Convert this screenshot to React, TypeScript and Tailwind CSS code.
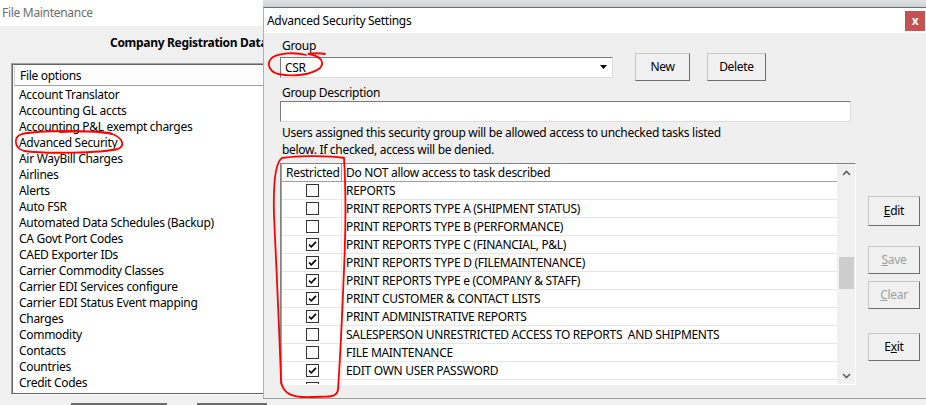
import React from 'react';

const files = [
  'Account Translator',
  'Accounting GL accts',
  'Accounting P&L exempt charges',
  'Advanced Security',
  'Air WayBill Charges',
  'Airlines',
  'Alerts',
  'Auto FSR',
  'Automated Data Schedules (Backup)',
  'CA Govt Port Codes',
  'CAED Exporter IDs',
  'Carrier Commodity Classes',
  'Carrier EDI Services configure',
  'Carrier EDI Status Event mapping',
  'Charges',
  'Commodity',
  'Contacts',
  'Countries',
  'Credit Codes',
];

const tasks: [string, boolean][] = [
  ['REPORTS', false],
  ['PRINT REPORTS TYPE A (SHIPMENT STATUS)', false],
  ['PRINT REPORTS TYPE B (PERFORMANCE)', false],
  ['PRINT REPORTS TYPE C (FINANCIAL, P&L)', true],
  ['PRINT REPORTS TYPE D (FILEMAINTENANCE)', true],
  ['PRINT REPORTS TYPE e (COMPANY & STAFF)', true],
  ['PRINT CUSTOMER & CONTACT LISTS', true],
  ['PRINT ADMINISTRATIVE REPORTS', true],
  ['SALESPERSON UNRESTRICTED ACCESS TO REPORTS  AND SHIPMENTS', false],
  ['FILE MAINTENANCE', false],
  ['EDIT OWN USER PASSWORD', true],
  ['ADD/DELETE/EDIT USERS', false],
];

function CheckBox({ checked }: { checked: boolean }) {
  return (
    <div className="w-[13px] h-[13px] border border-[#333333] bg-white flex items-center justify-center">
      {checked && (
        <svg width="11" height="11" viewBox="0 0 11 11">
          <path d="M2 5.5 L4.3 7.8 L9 2.8" fill="none" stroke="#000" strokeWidth="1.7" />
        </svg>
      )}
    </div>
  );
}

function WinButton({ children, disabled, className }: { children: React.ReactNode; disabled?: boolean; className: string }) {
  return (
    <button
      className={
        'bg-[#f0f0f0] border border-[#c8c8c8] border-r-[#6d6d6d] border-b-[#6d6d6d] text-[12px] flex items-center justify-center ' +
        (disabled ? 'text-[#a0a0a0] ' : 'text-black ') +
        className
      }
    >
      {children}
    </button>
  );
}

function Annotations() {
  return (
    <svg className="absolute left-0 top-0 pointer-events-none" width="926" height="405" viewBox="0 0 926 405">
      <g fill="none" stroke="#ff0000" strokeWidth="1.8" strokeLinecap="round">
        <path d="M112 134 C95 130, 40 130, 22 134 C13 137, 14 148, 24 151 C45 154, 100 153, 118 149 C125 146, 124 138, 110 133 C100 131, 80 131, 60 132" />
        <path d="M306 55 C295 52, 280 53, 273 57 C266 62, 268 71, 278 74 C292 77, 312 75, 320 68 C325 62, 321 56, 308 54 C314 53, 320 53, 325 54" />
        <path d="M344 158 C325 155, 295 156, 282 158 C276 162, 273 180, 274 215 C276 260, 279 320, 281 380 C282 394, 292 398, 312 397 C326 396, 336 399, 338 390 C340 360, 342 320, 344 270 C346 225, 346 190, 344 158" />
      </g>
    </svg>
  );
}

export default function App() {
  return (
    <div className="relative w-[926px] h-[405px] overflow-hidden bg-[#f0f0f0] font-['Noto_Sans',sans-serif] text-[12px] tracking-[-0.3px] text-black">
      {/* background window */}
      <div className="flex flex-col">
        <div className="h-[26px] bg-white pl-[2px] leading-[26px] text-[#6d6d6d]">File Maintenance</div>
        <div className="mt-[9px] pl-[110px] leading-[16px] font-bold whitespace-nowrap">Company Registration Data</div>
        <div className="mt-[12px] ml-[11px] w-[320px] h-[332px] border border-[#a0a0a0] border-r-white border-b-white">
          <div className="h-full border border-[#646464] bg-white">
            <div className="h-[20px] ml-[1px] mt-[1px] border-b border-[#a0a0a0] border-l border-l-[#d0d0d0] pl-[5px] leading-[19px] bg-[#fcfcfc]">File options</div>
            <div className="pt-[1px] pl-[6px]">
              {files.map((f) => (
                <div key={f} className="h-[16px] leading-[16px] whitespace-nowrap">{f}</div>
              ))}
            </div>
          </div>
        </div>
        <div className="mt-[8px] flex">
          <div className="ml-[71px] w-[96px] h-[2px] bg-[#6d6d6d]" />
          <div className="ml-[30px] w-[70px] h-[2px] bg-[#6d6d6d]" />
        </div>
      </div>

      {/* dialog */}
      <div className="absolute left-[263px] top-0 w-[663px] h-[399px] flex flex-col">
        <div className="h-[7px] bg-gradient-to-b from-[#e0e2e4] to-[#cfd2d5]" />
        <div className="flex-1 flex flex-col border-t border-[#6e6e6e] border-l border-l-[#b0b0b0] border-b border-b-[#a0a0a0] bg-[#efefef]">
          <div className="h-[25px] bg-white flex items-center justify-between">
            <span className="pl-[3px]">Advanced Security Settings</span>
            <div className="w-[20px] h-[20px] mr-[1px] bg-[#c75050] text-white font-bold text-[12px] flex items-center justify-center leading-none">x</div>
          </div>
          <div className="pl-[16px] pt-[5px] flex flex-col">
            <div className="h-[15px] leading-[15px] pl-[2px]">Group</div>
            <div className="h-[28px] flex items-center">
              <div className="w-[333px] h-[21px] bg-white border border-[#7a7a7a] border-r-[#dcdcdc] border-b-[#dcdcdc] flex items-center">
                <span className="flex-1 pl-[4px] leading-[19px]">CSR</span>
                <div className="w-[15px] h-[17px] mr-[1px] flex items-center justify-center">
                  <svg width="7" height="4" viewBox="0 0 7 4"><path d="M0 0 H7 L3.5 4 Z" fill="#000" /></svg>
                </div>
              </div>
              <WinButton className="ml-[22px] w-[55px] h-[28px]">New</WinButton>
              <WinButton className="ml-[17px] w-[59px] h-[28px]">Delete</WinButton>
            </div>
            <div className="mt-[4px] h-[16px] leading-[16px] pl-[2px]">Group Description</div>
            <div className="w-[571px] h-[21px] bg-white border border-[#7a7a7a] border-r-[#dcdcdc] border-b-[#dcdcdc]" />
            <div className="mt-[2px] pl-[2px] leading-[17px]">
              <div>Users assigned this security group will be allowed access to unchecked tasks listed</div>
              <div>below. If checked, access will be denied.</div>
            </div>
            <div className="mt-[5px] flex">
              <div className="w-[576px] h-[222px] border border-[#828282] border-r-white border-b-white flex">
                <div className="w-[556px] h-[220px] overflow-hidden bg-white border-l border-[#a0a0a0]">
                  <div className="h-[18px] flex border-b border-[#a0a0a0]">
                    <div className="w-[60px] border-r border-[#a0a0a0] pl-[4px] leading-[17px]">Restricted</div>
                    <div className="pl-[4px] leading-[17px]">Do NOT allow access to task described</div>
                  </div>
                  {tasks.map(([t, c]) => (
                    <div key={t} className="h-[18px] flex border-b border-[#e6e6e6]">
                      <div className="w-[60px] border-r border-[#e6e6e6] flex items-center justify-center pl-[1px]">
                        <CheckBox checked={c} />
                      </div>
                      <div className="pl-[4px] leading-[17px] whitespace-pre">{t}</div>
                    </div>
                  ))}
                </div>
                <div className="w-[18px] h-[220px] bg-[#f0f0f0] flex flex-col items-center">
                  <div className="h-[17px] flex items-center justify-center">
                    <svg width="9" height="6" viewBox="0 0 9 6"><path d="M1 5 L4.5 1.5 L8 5" fill="none" stroke="#606060" strokeWidth="1.6" /></svg>
                  </div>
                  <div className="mt-[76px] w-[15px] h-[32px] bg-[#cdcdcd]" />
                  <div className="flex-1" />
                  <div className="h-[17px] flex items-center justify-center">
                    <svg width="9" height="6" viewBox="0 0 9 6"><path d="M1 1 L4.5 4.5 L8 1" fill="none" stroke="#606060" strokeWidth="1.6" /></svg>
                  </div>
                </div>
              </div>
              <div className="ml-[12px] pt-[33px] flex flex-col">
                <WinButton className="w-[52px] h-[30px]"><span><u>E</u>dit</span></WinButton>
                <WinButton disabled className="mt-[20px] w-[52px] h-[28px]"><span><u>S</u>ave</span></WinButton>
                <WinButton disabled className="mt-[7px] w-[52px] h-[28px]"><span><u>C</u>lear</span></WinButton>
                <WinButton className="mt-[24px] w-[52px] h-[28px]"><span>E<u>x</u>it</span></WinButton>
              </div>
            </div>
          </div>
        </div>
      </div>

      <Annotations />
    </div>
  );
}
